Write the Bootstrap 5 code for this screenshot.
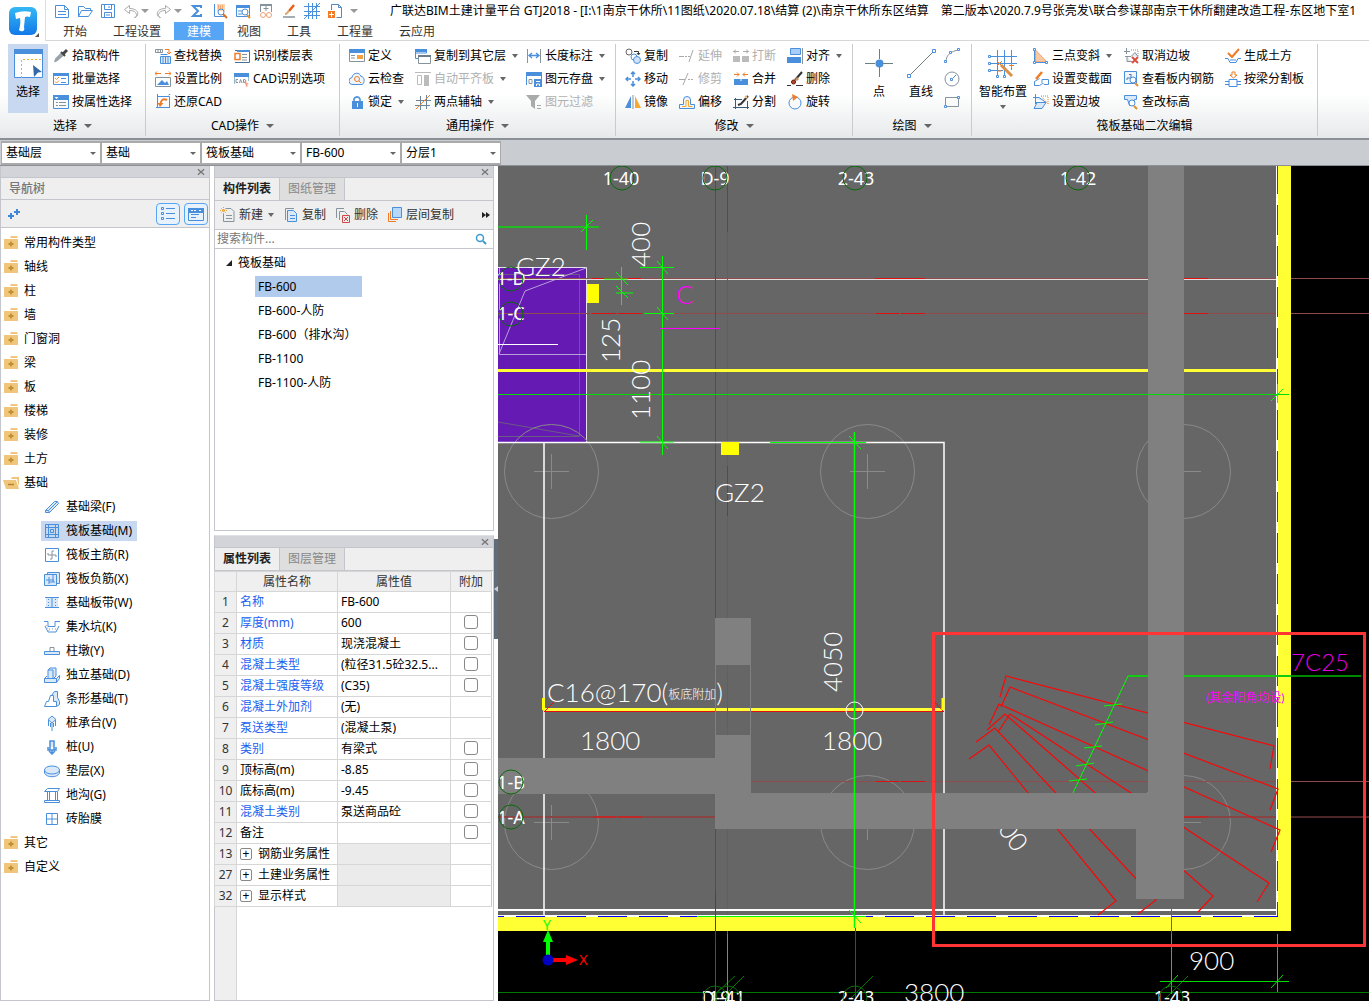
<!DOCTYPE html>
<html lang="zh-CN">
<head>
<meta charset="utf-8">
<meta name="viewport" content="width=device-width, initial-scale=1">
<title>广联达BIM土建计量平台 GTJ2018</title>
<link href="https://cdn.jsdelivr.net/npm/bootstrap@5.3.0/dist/css/bootstrap.min.css" rel="stylesheet">
<script src="https://cdn.jsdelivr.net/npm/bootstrap@5.3.0/dist/js/bootstrap.bundle.min.js"></script>
<style>
:root{--b:#4a8fdc;--line:#c4c6cc}
body{font:12px/16px "Noto Sans","Noto Sans CJK SC",sans-serif;color:#000;background:#fff}
button,input,select{font:inherit;color:inherit}
button{background:none;border:0;padding:0;white-space:nowrap}
svg{display:block;flex:none}
.ic{width:16px;height:16px;fill:none;stroke:var(--b)}
.logo-cell{width:46px;border-right:1px solid #ddd}
.qat{height:22px;gap:7px;padding-left:8px}
.qat .gap-car{display:flex;align-items:center;gap:2px}
.car{width:0;height:0;border:3px solid transparent;border-top:4px solid #666;border-bottom:0;flex:none}
.doc-title{padding-left:25px}
.tabs-row{height:19px;padding-left:4px;border-bottom:1px solid #d4d6d8}
.tabs-row a{padding:0 13px;line-height:19px;color:#333;text-decoration:none}
.tabs-row a.on{background:#57a6f6;color:#fff}
.ribbon{height:99px;background:linear-gradient(#fff 55%,#e6e9eb);border-bottom:2px solid #8b9096;padding-top:3px}
.grp{display:flex;flex-direction:column;height:92px;border-right:1px solid #c9cbcd}
.cap{height:26px;flex:none;display:flex;align-items:center;justify-content:center;gap:7px}
.cap .car,.qat .car{border-width:4px 4px 0}
.qat .car{border-top-color:#999}
.cmds{display:grid;grid-auto-flow:column;grid-template-rows:repeat(3,23px);padding-left:9px;height:69px;flex:none}
.cmds button{display:flex;align-items:center;gap:3px}
.cmds button .car{margin-left:3px}
.off{color:#b0b0b0}.off .ic{stroke:#b0b0b0}
.g1{width:146px}.g1 .cmds{padding-left:8px;grid-template-columns:45px 1fr}
.g2{width:194px}.g2 .cmds{grid-template-columns:79px 1fr}
.g3{width:276px}.g3 .cmds{grid-template-columns:66px 111px 1fr}
.g4{width:237px}.g4 .cmds{grid-template-columns:54px 54px 54px 1fr}
.g5{width:119px}.g5 .cmds{grid-template-columns:42px 43px 1fr;padding-left:6px}
.g6{width:346px}.g6 .cmds{grid-template-columns:54px 90px 102px 1fr;padding-left:7px}
.cmds .big{grid-row:span 3;flex-direction:column;gap:5px;width:40px;padding-top:3px}
.g6 .cmds .big{width:48px}
.big.on{background:#c7d8f0}
.big .ic{width:32px;height:32px}
.combo-row{height:26px;background:#c9ccd1;border-bottom:1px solid #8b9096;padding:1px 0 0 1px}
.combo-row select{width:100px;height:24px;border:2px solid #aaa;border-left-width:1px;border-right-width:1px;border-radius:0;padding:0 4px;appearance:none;background:#fff}
.combo{position:relative}
.combo .car{position:absolute;right:5px;top:11px;pointer-events:none;border-top-width:3px}
.nav-pane{width:210px;border:1px solid var(--line);border-top:0}
.mid-pane{width:280px;margin-left:4px}
.grip{height:12px;background:#d3d4da;border-bottom:1px solid var(--line);display:flex;justify-content:flex-end;align-items:center;padding-right:4px}
.grip svg{width:8px;height:8px;stroke:#777;stroke-width:1.500}
.nav-title{height:22px;background:#efefef;border-bottom:1px solid var(--line);color:#777;font-weight:500;padding-left:8px;line-height:22px}
.nav-tools{height:28px;background:#efefef;border-bottom:1px solid var(--line);padding:0 1px 0 6px;gap:4px}
.nav-tools .tog{width:24px;height:22px;border:1px solid #57a6f6;border-radius:4px;background:#e8f2fd;display:grid;place-items:center}
.tree,.tree ul{list-style:none;margin:0;padding:0}
.tree{padding-top:3px}
.tree .node{display:flex;align-items:center;height:24px;gap:5px;padding-left:2px;width:100%}
.tree ul{padding-left:40px}
.tree ul .node{width:max-content;height:20px;margin:4px 0;gap:6px;padding:0 5px 0 3px}
.tree ul li:first-child .node{margin-top:2px}
.tree ul li:last-child .node{margin-bottom:2px}
.tree .node.on{background:#c7d8f0}
.box{border:1px solid var(--line);border-top:0}
.ptabs{height:23px;background:#efefef;border-bottom:1px solid var(--line)}
.ptabs button{width:65px;border-right:1px solid var(--line);background:#dedede;color:#888}
.ptabs button.on{background:#efefef;color:#222;font-weight:700}
.ptools{height:29px;background:#efefef;border-bottom:1px solid var(--line);padding:0 3px 0 5px;color:#333;gap:9px}
.ptools button{display:flex;align-items:center;gap:3px}
.ptools .car{margin-left:2px}
.find{height:19px;border-bottom:1px solid var(--line);padding-right:5px}
.find input{border:0;outline:0;padding:0 2px;min-width:0;flex:1}
.find input::placeholder{color:#777;opacity:1}
.parts{height:281px;padding-top:3px}
.parts button{display:flex;align-items:center;width:107px;height:21px;margin:3px 0 0 40px;padding-left:3px;color:#000}
.parts button.root{margin:0 0 0 6px;height:21px;gap:5px}
.parts button.on{background:#b1cbec}
.props{width:277px;table-layout:fixed;border-collapse:collapse;margin:0 0 0 -1px}
.props th,.props td{height:21px;padding:0 3px;border:1px solid #d6d6d6;font-weight:400;white-space:nowrap;overflow:hidden;line-height:16px}
.props thead th{background:#efefef;text-align:center;color:#333;height:20px}
.props tbody th{background:#efefef;color:#333;text-align:center;padding:0}
.props td.lk{color:#1a5ff0}
.props td:last-child{text-align:center;border-right-color:var(--line)}
.props input{appearance:none;width:14px;height:14px;border:1px solid #888;border-radius:3px;margin:0;vertical-align:-2px;background:#fff}
.props .na{background:#ebebeb}
.props .exp{width:12px;height:12px;border:1px solid #888;border-radius:2px;line-height:9px;margin:0 6px 0 0;vertical-align:0;background:#fff}
.strip{width:22px;background:#efefef;border-right:1px solid #d6d6d6}
.splitter{width:4px;background:#fff;padding-top:373px}
.splitter button{width:4px;height:100px;background:#5f6b78;color:#fff;display:grid;place-items:center}
.model{min-width:0;background:#000}
.cad{font-family:Lato,"Noto Sans CJK SC",sans-serif;font-weight:300;fill:#fff}
.ax{font:18px "Noto Sans",sans-serif;fill:#fff;text-anchor:middle}
</style>
</head>
<body class="vh-100 overflow-hidden d-flex flex-column">
<svg width="0" height="0" class="position-absolute" aria-hidden="true"><defs>
<symbol id="x" viewBox="0 0 9 9"><path d="M1 1.500L8 7.500M8 1.500L1 7.500"/></symbol>
<symbol id="new" viewBox="0 0 16 16"><path d="M1.500 2.500h9l4 4v8h-13zM10.500 2.500v4h4M4 8.500h8M4 11.500h8"/></symbol>
<symbol id="open" viewBox="0 0 16 16"><path d="M1.500 13.500v-10h5l2 2h5v2M1.500 13.500l3-6h11l-4 6z"/></symbol>
<symbol id="save" viewBox="0 0 16 16"><path d="M1.500 1.500h13v13h-13zM4.500 1.500v5h7v-5M4.500 14.500v-5h7v5M9 3v2M6 12h4"/></symbol>
<symbol id="undo" viewBox="0 0 16 16"><path stroke="#aaa" d="M6.500 2.500l-5 4 5 4v-3c4 0 6 1 7 4 .5 2-1 3-2 3 5-1 5-9-5-9z"/></symbol>
<symbol id="redo" viewBox="0 0 16 16"><path stroke="#aaa" d="M9.500 2.500l5 4-5 4v-3c-4 0-6 1-7 4-.5 2 1 3 2 3-5-1-5-9 5-9z"/></symbol>
<symbol id="sum" viewBox="0 0 16 16"><path stroke-width="2" d="M12 5V3H4l5 5-5 5h8v-2"/></symbol>
<symbol id="q1" viewBox="0 0 16 16"><path d="M2.500 1v12.500H14"/><path fill="#f9d5b8" stroke="none" d="M5 1h8v7H5z"/><path stroke="#f07c28" stroke-dasharray="1 1" d="M6 3h6M6 5h6"/><circle cx="9" cy="9" r="3"/><path stroke="#d87020" stroke-width="2" d="M11 11l4 4"/></symbol>
<symbol id="q2" viewBox="0 0 16 16"><path d="M1.500 2.500h13v11h-13z"/><path fill="#4a8fdc" stroke="none" d="M1 2h14v3H1z"/><path d="M3 8h4M3 11h4"/><circle cx="10" cy="9" r="3" fill="#fff"/><path stroke="#e09030" stroke-width="2" d="M12 12l3 3"/></symbol>
<symbol id="q3" viewBox="0 0 16 16"><path stroke="#87939c" d="M2.500 9V1.500h11V9M8 3v5M5.500 5.500h5"/><path stroke="#87939c" stroke-width="2" d="M2 2h12"/><circle cx="5" cy="12" r="2.500" stroke="#f0a070"/><circle cx="11" cy="12" r="2.500" stroke="#f0a070"/></symbol>
<symbol id="q4" viewBox="0 0 16 16"><path stroke="#87939c" stroke-width="1.500" d="M2 14h12"/><path stroke="#e86018" stroke-width="2.500" d="M13 2l-5 6"/><path stroke="#d8a870" stroke-width="2" d="M8 8c-2 1-1 3-4 3"/></symbol>
<symbol id="q5" viewBox="0 0 16 16"><path d="M4.500 0v16M12.500 0v16M0 3.500h16M0 12.500h16M0 8.500h16M0 16L16 0M8.500 0v16"/></symbol>
<symbol id="q6" viewBox="0 0 16 16"><path d="M4.500 7V1.500h7l3 3v10h-5M11.500 1.500v3h3" stroke="#58b"/><path fill="#f07c28" stroke="none" d="M1 8h7v7H1z"/><path stroke="#fff" d="M4.500 9v5M2 11.500h5"/></symbol>
<symbol id="pick" viewBox="0 0 16 16"><path stroke="#9aa4ad" stroke-width="2" d="M2 14l1-3 6-6M3 13l7-6"/><path stroke="#444" stroke-width="3" d="M10 6l4-4"/><path stroke="#444" stroke-width="2" d="M8 4l4 4"/></symbol>
<symbol id="batch" viewBox="0 0 16 16"><path d="M.5 2.500h15v11H.500z"/><path fill="#4a8fdc" stroke="none" d="M0 2h16v3H0z"/><path stroke="#f0902c" d="M2 7l1.500 1.500L6 6M2 10.500L3.500 12 6 9.500"/><path d="M8 7.500h5M8 11.500h5"/></symbol>
<symbol id="attr" viewBox="0 0 16 16"><path d="M.5 1.500h15v13H.500z"/><path fill="#4a8fdc" stroke="none" d="M0 1h16v5H0z"/><path stroke="#87939c" d="M3 8.500h2M6 8.500h7M3 11.500h2M6 11.500h7"/><path fill="#fff" stroke="none" d="M1.500 3h4l-2 2z"/></symbol>
<symbol id="find" viewBox="0 0 16 16"><path stroke="#87939c" d="M.5 1.500h7v3h-7zM3 2v2M5.500 2v2"/><path stroke="#f07c28" d="M10 1.500h4v4M12 4l2 2 2-2"/><path fill="#dbe8f8" d="M5.500 8.500h10v7h-10zM8 9v6M10.500 9v6M13 9v6M5.500 6.500h7"/></symbol>
<symbol id="ratio" viewBox="0 0 16 16"><path stroke="#f07c28" d="M0 2.500h6M10 2.500h6M2 .5l-2 2 2 2M14 .5l2 2-2 2"/><path d="M.5 6.500h15v9H.500z" stroke="#87939c"/><path fill="#4a8fdc" stroke="none" d="M2 14l5-5 3 3 2-2 2 4z"/></symbol>
<symbol id="restore" viewBox="0 0 16 16"><path d="M2.500 0v14M1 13.500h13.500M2 2.500h12.500V14M13.500 1l2-1"/><path stroke="#f07c28" stroke-width="2" d="M12 6c-4-2-6 0-6.500 4"/><path fill="#f07c28" stroke="none" d="M2.500 9h6L5 13z"/></symbol>
<symbol id="tblr" viewBox="0 0 16 16"><path stroke="#4a6f96" d="M1 2.500h14.500v12H1"/><path stroke="#87939c" d="M8 6.500h5M8 9.500h5M8 12h5"/><path stroke="#4a8fdc" stroke-width="2" d="M3 3h13"/><path stroke="#f07c28" stroke-width="1.500" d="M1 5.500h5v6H1z"/></symbol>
<symbol id="cado" viewBox="0 0 16 16"><path d="M.5 13V2.500h14V10" stroke="#9bc"/><path fill="#4a8fdc" stroke="none" d="M0 2h15v4H0z"/><path stroke="#87939c" d="M4 8.500H2v3h2M5.500 12l1-3.500L8 12M9.500 8.500v3h1.500l1-1.500-1-1.500z"/><path fill="#f0a080" stroke="none" d="M10 10l5 3-2 .5 1 2h-2l-.5-2z"/></symbol>
<symbol id="def" viewBox="0 0 16 16"><path stroke="#87939c" d="M.5 2.500h15v11H.500zM2 7.500h4M2 10h4"/><path fill="#4a8fdc" stroke="none" d="M0 1h16v4H0z"/><path fill="#f5a040" stroke="none" d="M8 7h6v4H8z"/></symbol>
<symbol id="cloud" viewBox="0 0 16 16"><path d="M4 13.500a3.500 3.500 0 0 1-1-7C4 1 11 1 12 5.500c4 0 4 7 1 8z" fill="#eef5fd"/><circle cx="8" cy="8" r="2.500" stroke="#f07c28"/><path stroke="#f07c28" d="M10 10l2 2"/></symbol>
<symbol id="lock" viewBox="0 0 16 16"><path stroke-width="1.600" d="M5 8V5a3.200 3.200 0 0 1 6 0v3"/><path fill="#4a8fdc" stroke="none" d="M3 7h11v8H3z"/><path stroke="#fff" d="M8.500 9v4"/></symbol>
<symbol id="clay" viewBox="0 0 16 16"><path d="M.5 1v9.500H3M.5 5h11V1.500H.500z"/><path fill="#4a8fdc" stroke="none" d="M0 1h12v3H0z"/><path stroke="#87939c" fill="#fff" d="M3.500 7.500h12v8h-12z"/><path stroke="#6d7c88" stroke-width="2" d="M3 8h13"/></symbol>
<symbol id="slab" viewBox="0 0 16 16"><path stroke="#bbb" d="M0 1.500h16M2.500 4.500h4v9h-4z"/><path fill="#bbb" stroke="none" d="M9 4h5v11H9z"/></symbol>
<symbol id="axis" viewBox="0 0 16 16"><path stroke="#6d8296" d="M5.500 2v14M11.500 1v14M1 6.500h15M0 11.500h15"/><path stroke="#f07c28" d="M1 15L15 1"/></symbol>
<symbol id="dim" viewBox="0 0 16 16"><path stroke="#87939c" d="M1.500 1v14M14.500 1v14"/><path d="M3 7.500h10M6 5L3 7.500 6 10M10 5l3 2.500-3 2.500" stroke-width="1.300"/></symbol>
<symbol id="store" viewBox="0 0 16 16"><path d="M.5 14V1.500h15V8"/><path fill="#4a8fdc" stroke="none" d="M0 1h16v4H0zM8 8h8v8H8z"/><path stroke="#87939c" d="M3 8.500h3v4H3z"/><path stroke="#fff" d="M10 10.500h4M10.500 15v-2h3v2"/></symbol>
<symbol id="filt" viewBox="0 0 16 16"><path fill="#aaa" stroke="none" d="M0 1h14L9 7v8l-4-3V7z"/><path stroke="#aaa" d="M11 11.500h4M11 14.500h4"/></symbol>
<symbol id="copy" viewBox="0 0 16 16"><circle cx="4" cy="4" r="3" stroke="#666"/><path stroke="#333" d="M9 3.500h4.500V6M12 5l1.500 2L15 5"/><circle cx="9" cy="9" r="3"/><circle cx="12" cy="12" r="3.500" fill="#cfe2f8"/></symbol>
<symbol id="move" viewBox="0 0 16 16"><path stroke-width="1.500" d="M8 1v5M8 10v5M1 8h5M10 8h5M6 3l2-2 2 2M6 13l2 2 2-2M3 6L1 8l2 2M13 6l2 2-2 2"/></symbol>
<symbol id="mir" viewBox="0 0 16 16"><path stroke="none" fill="#4a8fdc" d="M0 14L6 2v12z"/><path stroke="#87939c" d="M8 1v14"/><path stroke="none" fill="#f6a832" d="M16 14L10 2v12z"/></symbol>
<symbol id="ext" viewBox="0 0 16 16"><path stroke="#aaa" d="M0 8.500h5M6 8.500h2M9 8.500h2M10 14l4-12"/></symbol>
<symbol id="trim" viewBox="0 0 16 16"><path stroke="#aaa" d="M0 8.500h6M9 8.500h2M12 8.500h2M4 14L9 2"/></symbol>
<symbol id="offs" viewBox="0 0 16 16"><path d="M.5 14.500v-4h4V6a3.500 3.500 0 0 1 7 0v4.500h4v4z" fill="#eef5fd"/><path stroke="#f6a832" d="M3 12.500h4V6.500h2.500v6h4"/></symbol>
<symbol id="brk" viewBox="0 0 16 16"><path fill="#bbb" stroke="none" d="M0 8h7v6H0zM9 8h7v6H9z"/><path stroke="#aaa" d="M0 3.500h6M2 1.500v4M10 3.500h6M14 1.500v4"/></symbol>
<symbol id="mrg" viewBox="0 0 16 16"><path fill="#4a8fdc" stroke="none" d="M1 8h14v6H1z"/><path stroke="#f07c28" d="M1 3.500h5M4 1.500l2 2-2 2M10 3.500h5M12 1.500l-2 2 2 2"/><path stroke="#fff" d="M8 8v2"/></symbol>
<symbol id="spl" viewBox="0 0 16 16"><path stroke="#3a5a7a" d="M1 5.500h8M2.500 4v11M14.500 7v8M0 13.500h16"/><path stroke="#333" stroke-width="2" d="M5 11l3-1 7-8"/><path stroke="#f6c080" stroke-width="2" d="M12 2l2 2"/></symbol>
<symbol id="ali" viewBox="0 0 16 16"><path fill="#4a8fdc" stroke="none" d="M0 9h14v6H0z"/><path fill="#a8cdf8" d="M3.500 .5h10v6h-10z"/><path stroke="#87939c" d="M15.500 0v16"/></symbol>
<symbol id="del" viewBox="0 0 16 16"><path stroke="#333" stroke-width="2" d="M15 1L8 9"/><path stroke="#c89060" stroke-width="3" d="M9 7l2 2"/><circle cx="6.500" cy="11" r="2" fill="#c04820" stroke="#601808"/><path stroke="#333" d="M0 14.500h4M9 14.500h7"/></symbol>
<symbol id="rot" viewBox="0 0 16 16"><circle cx="8" cy="9" r="6"/><path fill="#f07c28" stroke="none" d="M5 0l6 3-5 4z"/></symbol>
<symbol id="sel" viewBox="0 0 32 32"><path fill="#fff" d="M2.500 2.500h28v28h-28z"/><path fill="#4a8fdc" stroke="none" d="M2 2h29v5H2z"/><path stroke="#f6a832" stroke-dasharray="2 2" d="M9.500 31V12.500H31"/><path fill="#3468a8" stroke="none" d="M21 18l9 7-4 .5L22 30z"/></symbol>
<symbol id="pt" viewBox="0 0 32 32"><path stroke="#6d8080" d="M2 16.500h10M20 16.500h10M16.500 2v10M16.500 20v10"/><circle cx="16.500" cy="16.500" r="4" fill="#4a8fdc" stroke="none"/></symbol>
<symbol id="ln" viewBox="0 0 32 32"><path stroke="#6d8080" d="M5 28L28 5"/><path fill="#fff" d="M2.500 27.500h3v3h-3zM27.500 2.500h3v3h-3z"/></symbol>
<symbol id="arc" viewBox="0 0 16 16"><path stroke="#87939c" d="M2 14C2 8 5 4 14 2"/><path fill="#fff" d="M.5 12.500h2v2h-2zM5.500 3.500h2v2h-2zM13.500 .5h2v2h-2z"/></symbol>
<symbol id="cir" viewBox="0 0 16 16"><circle cx="8" cy="8" r="7" stroke="#87939c"/><path fill="#fff" d="M6.500 7.500h2v2h-2zM9 7l3-3"/></symbol>
<symbol id="rec" viewBox="0 0 16 16"><path stroke="#87939c" d="M1.500 3.500h13v9h-13z"/><path fill="#fff" d="M.5 11.500h2v2h-2zM13.500 2.500h2v2h-2z"/></symbol>
<symbol id="smart" viewBox="0 0 32 32"><path d="M4 9.500h26M4 16.500h26M4 23.500h12M10.500 3v26M17.500 3v26M24.500 3v20"/><path fill="#fff" d="M1.500 8.500h2v2h-2zM1.500 15.500h2v2h-2zM1.500 22.500h2v2h-2zM9.500 28.500h2v2h-2zM16.500 28.500h2v2h-2z"/><path stroke="#d8904c" stroke-width="3" d="M14 18l11 11"/><path stroke="#f07c28" d="M10 14l5 5M15 14l-5 5M24.500 16v5M22 18.500h5M10 24h4"/></symbol>
<symbol id="tri" viewBox="0 0 16 16"><path fill="#f8c8a0" stroke="#f0a070" d="M2.500 2v12H14z"/><path d="M1.500 2v12.500H13"/><path fill="#fff" d="M.5 .5h2v2h-2zM.5 13.500h2v2h-2zM12.500 13.500h2v2h-2z"/></symbol>
<symbol id="sec" viewBox="0 0 16 16"><path d="M1.500 14.500v-4l5-3M1.500 14.500h5l3-2M9 8.500h6.500v5H11l-2-2z"/><path stroke="#f07c28" stroke-width="2.500" d="M9 1L3 8"/></symbol>
<symbol id="slope" viewBox="0 0 16 16"><path fill="#dbe8f8" d="M3 8.500h10l-4 6H1l3-6M2.500 0v10M0 3.500h6l7 5"/><path stroke="#f07c28" stroke-dasharray="1 1" d="M8 2h7v8z"/></symbol>
<symbol id="noslope" viewBox="0 0 16 16"><path stroke="#87939c" fill="#e4e8ec" d="M2 8.500h6l4-4 3 4M3.500 0v6M1 3.500h6M4 8.500v5h5"/><path stroke="#87939c" stroke-dasharray="1 1" d="M8 2h7v6"/><path stroke="#d85040" stroke-width="2" d="M9 9l6 6M15 9l-6 6"/></symbol>
<symbol id="view" viewBox="0 0 16 16"><path fill="#eef5fd" d="M1.500 .5h12v12h-12z"/><path d="M4 7h7M8 3v8M6 3.500h2M4 9V7" stroke="#55789a"/><circle cx="10" cy="9" r="3" fill="#fff"/><path stroke="#e09030" stroke-width="2" d="M12 12l3 3"/></symbol>
<symbol id="elev" viewBox="0 0 16 16"><path fill="#dbe8f8" d="M1.500 1.500h12v4h-2l-2 6h-3l-2-6h-3z"/><circle cx="9" cy="9" r="3" fill="#fff"/><path stroke="#e09030" stroke-width="2" d="M11 12l3 3"/></symbol>
<symbol id="earth" viewBox="0 0 16 16"><path stroke="#f07c28" stroke-width="2" d="M3 5l4 4 7-8"/><path d="M0 10.500h3l2 4h6l2-4h3M5 12h6"/></symbol>
<symbol id="cut" viewBox="0 0 16 16"><path d="M0 10.500h4v-2h8v2h4M0 13.500h4v2h8v-2h4M4 10v4M12 10v4"/><path stroke="#f07c28" d="M7 1h3v3h2l-3.500 3L5 4h2z"/></symbol>
<symbol id="fold" viewBox="0 0 16 16"><path fill="#f0c67c" stroke="none" d="M1 4h14v10H1zM8 1h6l1 2H7z"/><path stroke="#c09030" stroke-width="1.800" d="M8 6.500v5M5.500 9h5"/></symbol>
<symbol id="foldo" viewBox="0 0 16 16"><path fill="#f0c67c" stroke="none" d="M0 5h13l3 9H3zM9 2h7v10l-2-8H8z"/><path stroke="#b88428" stroke-width="1.500" d="M5 9.500h6"/></symbol>
<symbol id="t1" viewBox="0 0 16 16"><path fill="#dbe8f8" d="M1.500 11.500l9-9h3l1 2-9 9h-4zM1.500 11.500h3l1 2M4.500 11.500l9-9"/></symbol>
<symbol id="t2" viewBox="0 0 16 16"><path d="M1.500 1.500h13v13h-13zM4.500 1.500v13M11.500 1.500v13M1.500 4.500h13M1.500 11.500h13M6.500 6.500h3v3h-3z"/></symbol>
<symbol id="t3" viewBox="0 0 16 16"><path d="M1.500 1.500h13v13h-13z"/><path stroke="#87939c" d="M8 4v8M4 8h8M8 4h2M8 12H6M4 8V6M12 8v2"/></symbol>
<symbol id="t4" viewBox="0 0 16 16"><path fill="#dbe8f8" d="M.5 3.500h12v11H.500zM3.500 3V1.500h12v11H13M5 6v7M9 4v7M2 9h8M5 11h6"/></symbol>
<symbol id="t5" viewBox="0 0 16 16"><path stroke="none" fill="#dbe8f8" d="M2 3h12v10H2z"/><path d="M1 2.500h14M1 12.500h14M8 3v10"/><path stroke-dasharray="1 2" d="M4.500 4v8M11.500 4v8"/></symbol>
<symbol id="t6" viewBox="0 0 16 16"><path d="M0 2.500h4v5h7v-5h5M1 7l3 6h8l3-6"/><path stroke="#87939c" stroke-dasharray="1 2" d="M2 6l3 6M5 10h8"/></symbol>
<symbol id="t7" viewBox="0 0 16 16"><path fill="#dbe8f8" d="M.5 8.500h15v3H.500z"/><path stroke="#87939c" d="M6 8V4.500h4V8"/></symbol>
<symbol id="t8" viewBox="0 0 16 16"><path fill="#dbe8f8" d="M.5 11.500h12v4H.500zM4 11V3l2-2h6v8l-2 2M.5 11.500L3 9M12.500 11.500l3-3v3l-3 4M4 3h5v8"/></symbol>
<symbol id="t9" viewBox="0 0 16 16"><path fill="#dbe8f8" d="M7.500 4.500l3-4h3v6l2 4v3l-3 2"/><path fill="#fff" d="M.5 15.500l2-5h2l2-6h3v6h3v5z"/></symbol>
<symbol id="t10" viewBox="0 0 16 16"><path fill="#dbe8f8" d="M8 1l4 3.500L8 8 4 4.500z"/><path d="M4.500 5v6M11.500 5v6M8 8v8M6.500 8v4M9.500 8v4"/></symbol>
<symbol id="t11" viewBox="0 0 16 16"><path fill="#dbe8f8" stroke-width="1.500" d="M6 2h4v9H6zM8 11v4M4 8v3h8V8M5 12l3 3 3-3"/></symbol>
<symbol id="t12" viewBox="0 0 16 16"><path fill="#dbe8f8" d="M.5 7v3c2 5 13 5 15 0V7"/><ellipse cx="8" cy="7" rx="7.500" ry="4" fill="#dbe8f8"/></symbol>
<symbol id="t13" viewBox="0 0 16 16"><path fill="#fff" d="M3.500 1.500h12l-2 3H.500zM3.500 5v8M5.500 5v8M11.500 5v8M13.500 5v8M.5 13.500h15v2H.500z"/></symbol>
<symbol id="t14" viewBox="0 0 16 16"><path d="M2.500 2.500h11v11h-11zM8 3v10M3 8h10"/></symbol>
<symbol id="m1" viewBox="0 0 16 16"><path stroke="#87939c" d="M6 1.500h5l3 3v10H3.500V7M6 8.500h6M6 11.500h6"/><path stroke="#f0a030" stroke-dasharray="1 1" d="M1 1l5 5M6 1L1 6M0 3.500h7M3.500 0v7"/></symbol>
<symbol id="m2" viewBox="0 0 16 16"><path stroke="#87939c" d="M2.500 13V1.500H11"/><path fill="#dbe8f8" d="M4.500 3.500h6l3 3v8h-9zM7 8.500h5M7 11.500h5"/></symbol>
<symbol id="m3" viewBox="0 0 16 16"><path stroke="#87939c" d="M1.500 11V1.500H9M4.500 13V4.500h5l3 3"/><path stroke="#d04848" d="M7.500 8.500h7v7h-7zM9 10l4 4M13 10l-4 4"/></symbol>
<symbol id="m4" viewBox="0 0 16 16"><path stroke="#f07c28" d="M1.500 6v8.500H9M3.500 4v8.500H11"/><path fill="#b8d8fa" d="M5.500 .5h9v10h-9z"/></symbol>
</defs></svg>

<header class="d-flex">
  <div class="logo-cell d-flex align-items-center ps-2">
    <svg width="32" height="32" viewBox="0 0 32 32" role="img" aria-label="GTJ"><defs><linearGradient id="lg" x2="0" y2="1"><stop stop-color="#35b8f5"/><stop offset="1" stop-color="#127ae8"/></linearGradient></defs><rect x="1" y="2" width="28" height="28" rx="6" fill="url(#lg)"/><path fill="#fff" d="M7 8q8-3 16-1l-1 5q-3-1-5 0l-1 10q1 3-1 4t-4-1q2-7 1-12l-4 1z"/><path fill="#555" d="M31 28v4h-4z"/></svg>
  </div>
  <div class="flex-grow-1 overflow-hidden">
    <div class="qat d-flex align-items-center text-nowrap">
      <button aria-label="新建"><svg class="ic"><use href="#new"/></svg></button>
      <button aria-label="打开"><svg class="ic"><use href="#open"/></svg></button>
      <button aria-label="保存"><svg class="ic"><use href="#save"/></svg></button>
      <button aria-label="撤销" class="gap-car"><svg class="ic"><use href="#undo"/></svg><i class="car"></i></button>
      <button aria-label="恢复" class="gap-car"><svg class="ic"><use href="#redo"/></svg><i class="car"></i></button>
      <button aria-label="汇总"><svg class="ic"><use href="#sum"/></svg></button>
      <button aria-label="查看"><svg class="ic"><use href="#q1"/></svg></button>
      <button aria-label="查找"><svg class="ic"><use href="#q2"/></svg></button>
      <button aria-label="报表"><svg class="ic"><use href="#q3"/></svg></button>
      <button aria-label="格式刷"><svg class="ic"><use href="#q4"/></svg></button>
      <button aria-label="轴网"><svg class="ic"><use href="#q5"/></svg></button>
      <button aria-label="添加"><svg class="ic"><use href="#q6"/></svg></button>
      <button aria-label="更多"><i class="car d-block"></i></button>
      <span class="doc-title">广联达BIM土建计量平台 GTJ2018 - [I:\1南京干休所\11图纸\2020.07.18\结算 (2)\南京干休所东区结算　第二版本\2020.7.9号张亮发\联合参谋部南京干休所翻建改造工程-东区地下室1</span>
    </div>
    <nav class="tabs-row d-flex"><a href="#">开始</a><a href="#">工程设置</a><a href="#" class="on">建模</a><a href="#">视图</a><a href="#">工具</a><a href="#">工程量</a><a href="#">云应用</a></nav>
  </div>
</header>

<section class="ribbon d-flex">
  <div class="grp g1"><div class="cmds">
    <button class="big on"><svg class="ic"><use href="#sel"/></svg>选择</button>
    <button><svg class="ic"><use href="#pick"/></svg>拾取构件</button>
    <button><svg class="ic"><use href="#batch"/></svg>批量选择</button>
    <button><svg class="ic"><use href="#attr"/></svg>按属性选择</button>
  </div><div class="cap">选择<i class="car"></i></div></div>
  <div class="grp g2"><div class="cmds">
    <button><svg class="ic"><use href="#find"/></svg>查找替换</button>
    <button><svg class="ic"><use href="#ratio"/></svg>设置比例</button>
    <button><svg class="ic"><use href="#restore"/></svg>还原CAD</button>
    <button><svg class="ic"><use href="#tblr"/></svg>识别楼层表</button>
    <button><svg class="ic"><use href="#cado"/></svg>CAD识别选项</button>
  </div><div class="cap">CAD操作<i class="car"></i></div></div>
  <div class="grp g3"><div class="cmds">
    <button><svg class="ic"><use href="#def"/></svg>定义</button>
    <button><svg class="ic"><use href="#cloud"/></svg>云检查</button>
    <button><svg class="ic"><use href="#lock"/></svg>锁定<i class="car"></i></button>
    <button><svg class="ic"><use href="#clay"/></svg>复制到其它层<i class="car"></i></button>
    <button class="off"><svg class="ic"><use href="#slab"/></svg>自动平齐板<i class="car"></i></button>
    <button><svg class="ic"><use href="#axis"/></svg>两点辅轴<i class="car"></i></button>
    <button><svg class="ic"><use href="#dim"/></svg>长度标注<i class="car"></i></button>
    <button><svg class="ic"><use href="#store"/></svg>图元存盘<i class="car"></i></button>
    <button class="off"><svg class="ic"><use href="#filt"/></svg>图元过滤</button>
  </div><div class="cap">通用操作<i class="car"></i></div></div>
  <div class="grp g4"><div class="cmds">
    <button><svg class="ic"><use href="#copy"/></svg>复制</button>
    <button><svg class="ic"><use href="#move"/></svg>移动</button>
    <button><svg class="ic"><use href="#mir"/></svg>镜像</button>
    <button class="off"><svg class="ic"><use href="#ext"/></svg>延伸</button>
    <button class="off"><svg class="ic"><use href="#trim"/></svg>修剪</button>
    <button><svg class="ic"><use href="#offs"/></svg>偏移</button>
    <button class="off"><svg class="ic"><use href="#brk"/></svg>打断</button>
    <button><svg class="ic"><use href="#mrg"/></svg>合并</button>
    <button><svg class="ic"><use href="#spl"/></svg>分割</button>
    <button><svg class="ic"><use href="#ali"/></svg>对齐<i class="car"></i></button>
    <button><svg class="ic"><use href="#del"/></svg>删除</button>
    <button><svg class="ic"><use href="#rot"/></svg>旋转</button>
  </div><div class="cap">修改<i class="car"></i></div></div>
  <div class="grp g5"><div class="cmds">
    <button class="big"><svg class="ic"><use href="#pt"/></svg>点</button>
    <button class="big"><svg class="ic"><use href="#ln"/></svg>直线</button>
    <button aria-label="弧线"><svg class="ic"><use href="#arc"/></svg></button>
    <button aria-label="圆"><svg class="ic"><use href="#cir"/></svg></button>
    <button aria-label="矩形"><svg class="ic"><use href="#rec"/></svg></button>
  </div><div class="cap">绘图<i class="car"></i></div></div>
  <div class="grp g6"><div class="cmds">
    <button class="big"><svg class="ic"><use href="#smart"/></svg>智能布置<i class="car m-0"></i></button>
    <button><svg class="ic"><use href="#tri"/></svg>三点变斜<i class="car"></i></button>
    <button><svg class="ic"><use href="#sec"/></svg>设置变截面</button>
    <button><svg class="ic"><use href="#slope"/></svg>设置边坡</button>
    <button><svg class="ic"><use href="#noslope"/></svg>取消边坡</button>
    <button><svg class="ic"><use href="#view"/></svg>查看板内钢筋</button>
    <button><svg class="ic"><use href="#elev"/></svg>查改标高</button>
    <button><svg class="ic"><use href="#earth"/></svg>生成土方</button>
    <button><svg class="ic"><use href="#cut"/></svg>按梁分割板</button>
  </div><div class="cap">筏板基础二次编辑</div></div>
</section>

<div class="combo-row d-flex">
  <div class="combo"><select aria-label="楼层"><option>基础层</option></select><i class="car"></i></div>
  <div class="combo"><select aria-label="构件大类"><option>基础</option></select><i class="car"></i></div>
  <div class="combo"><select aria-label="构件类型"><option>筏板基础</option></select><i class="car"></i></div>
  <div class="combo"><select aria-label="构件"><option>FB-600</option></select><i class="car"></i></div>
  <div class="combo"><select aria-label="分层"><option>分层1</option></select><i class="car"></i></div>
</div>

<main class="d-flex flex-grow-1 overflow-hidden">
  <aside class="nav-pane flex-shrink-0 overflow-hidden">
    <div class="grip"><button aria-label="关闭导航树"><svg><use href="#x"/></svg></button></div>
    <div class="nav-title">导航树</div>
    <div class="nav-tools d-flex align-items-center">
      <button aria-label="展开" class="me-auto"><svg width="14" height="12" viewBox="0 0 14 12" stroke="#3f86d4" stroke-width="2"><path d="M1 8h6M4 5v6M7 4h6M10 1v6"/></svg></button>
      <button class="tog" aria-label="列表"><svg class="ic"><path d="M1.500 1.500h2v2h-2zM1.500 6.500h2v2h-2zM1.500 11.500h2v2h-2zM6 2.500h9M6 7.500h9M6 12.500h9"/></svg></button>
      <button class="tog" aria-label="详情"><svg class="ic"><path d="M.5 2.500h15v12H.500zM3 8.500h8M3 11.500h5"/><path stroke="none" fill="#4a8fdc" d="M0 2h16v5H0z"/><path stroke="#fff" stroke-dasharray="2 1" d="M3 4.500h6M11 4.500h3"/></svg></button>
    </div>
    <ul class="tree">
      <li><button class="node"><svg class="ic"><use href="#fold"/></svg>常用构件类型</button></li>
      <li><button class="node"><svg class="ic"><use href="#fold"/></svg>轴线</button></li>
      <li><button class="node"><svg class="ic"><use href="#fold"/></svg>柱</button></li>
      <li><button class="node"><svg class="ic"><use href="#fold"/></svg>墙</button></li>
      <li><button class="node"><svg class="ic"><use href="#fold"/></svg>门窗洞</button></li>
      <li><button class="node"><svg class="ic"><use href="#fold"/></svg>梁</button></li>
      <li><button class="node"><svg class="ic"><use href="#fold"/></svg>板</button></li>
      <li><button class="node"><svg class="ic"><use href="#fold"/></svg>楼梯</button></li>
      <li><button class="node"><svg class="ic"><use href="#fold"/></svg>装修</button></li>
      <li><button class="node"><svg class="ic"><use href="#fold"/></svg>土方</button></li>
      <li><button class="node"><svg class="ic"><use href="#foldo"/></svg>基础</button>
        <ul>
          <li><button class="node"><svg class="ic"><use href="#t1"/></svg>基础梁(F)</button></li>
          <li><button class="node on"><svg class="ic"><use href="#t2"/></svg>筏板基础(M)</button></li>
          <li><button class="node"><svg class="ic"><use href="#t3"/></svg>筏板主筋(R)</button></li>
          <li><button class="node"><svg class="ic"><use href="#t4"/></svg>筏板负筋(X)</button></li>
          <li><button class="node"><svg class="ic"><use href="#t5"/></svg>基础板带(W)</button></li>
          <li><button class="node"><svg class="ic"><use href="#t6"/></svg>集水坑(K)</button></li>
          <li><button class="node"><svg class="ic"><use href="#t7"/></svg>柱墩(Y)</button></li>
          <li><button class="node"><svg class="ic"><use href="#t8"/></svg>独立基础(D)</button></li>
          <li><button class="node"><svg class="ic"><use href="#t9"/></svg>条形基础(T)</button></li>
          <li><button class="node"><svg class="ic"><use href="#t10"/></svg>桩承台(V)</button></li>
          <li><button class="node"><svg class="ic"><use href="#t11"/></svg>桩(U)</button></li>
          <li><button class="node"><svg class="ic"><use href="#t12"/></svg>垫层(X)</button></li>
          <li><button class="node"><svg class="ic"><use href="#t13"/></svg>地沟(G)</button></li>
          <li><button class="node"><svg class="ic"><use href="#t14"/></svg>砖胎膜</button></li>
        </ul></li>
      <li><button class="node"><svg class="ic"><use href="#fold"/></svg>其它</button></li>
      <li><button class="node"><svg class="ic"><use href="#fold"/></svg>自定义</button></li>
    </ul>
  </aside>

  <section class="mid-pane flex-shrink-0 d-flex flex-column overflow-hidden">
    <div class="box flex-shrink-0">
      <div class="grip"><button aria-label="关闭构件列表"><svg><use href="#x"/></svg></button></div>
      <div class="ptabs d-flex"><button class="on">构件列表</button><button>图纸管理</button></div>
      <div class="ptools d-flex align-items-center">
        <button><svg class="ic"><use href="#m1"/></svg>新建<i class="car"></i></button>
        <button><svg class="ic"><use href="#m2"/></svg>复制</button>
        <button><svg class="ic"><use href="#m3"/></svg>删除</button>
        <button class="me-auto"><svg class="ic"><use href="#m4"/></svg>层间复制</button>
        <button aria-label="更多工具"><svg width="8" height="6" viewBox="0 0 8 6"><path d="M0 0l4 3-4 3zM4 0l4 3-4 3z" fill="#222"/></svg></button>
      </div>
      <div class="find d-flex align-items-center"><input type="text" placeholder="搜索构件..." aria-label="搜索构件"><svg width="14" height="14" viewBox="0 0 14 14" fill="none" stroke="#3c9ad0" stroke-width="1.500"><circle cx="6" cy="6" r="3.500"/><path stroke-width="2" d="M9 9l3 3"/></svg></div>
      <div class="parts">
        <button class="root"><svg width="9" height="8" viewBox="0 0 9 8"><path d="M8 1v6H2z" fill="#222"/></svg>筏板基础</button>
        <button class="on">FB-600</button><button>FB-600-人防</button><button>FB-600（排水沟）</button><button>FB-1100</button><button>FB-1100-人防</button>
      </div>
    </div>
    <div class="box flex-grow-1 d-flex flex-column mt-1 border-top">
      <div class="grip"><button aria-label="关闭属性列表"><svg><use href="#x"/></svg></button></div>
      <div class="ptabs d-flex"><button class="on">属性列表</button><button>图层管理</button></div>
      <table class="props">
        <colgroup><col width="22"><col width="101"><col width="113"><col width="41"></colgroup>
        <thead><tr><th></th><th>属性名称</th><th>属性值</th><th>附加</th></tr></thead>
        <tbody>
        <tr><th>1</th><td class="lk">名称</td><td>FB-600</td><td></td></tr>
        <tr><th>2</th><td class="lk">厚度(mm)</td><td>600</td><td><input type="checkbox" aria-label="附加 厚度"></td></tr>
        <tr><th>3</th><td class="lk">材质</td><td>现浇混凝土</td><td><input type="checkbox" aria-label="附加 材质"></td></tr>
        <tr><th>4</th><td class="lk">混凝土类型</td><td>(粒径31.5砼32.5...</td><td><input type="checkbox" aria-label="附加 混凝土类型"></td></tr>
        <tr><th>5</th><td class="lk">混凝土强度等级</td><td>(C35)</td><td><input type="checkbox" aria-label="附加 混凝土强度等级"></td></tr>
        <tr><th>6</th><td class="lk">混凝土外加剂</td><td>(无)</td><td></td></tr>
        <tr><th>7</th><td class="lk">泵送类型</td><td>(混凝土泵)</td><td></td></tr>
        <tr><th>8</th><td class="lk">类别</td><td>有梁式</td><td><input type="checkbox" aria-label="附加 类别"></td></tr>
        <tr><th>9</th><td>顶标高(m)</td><td>-8.85</td><td><input type="checkbox" aria-label="附加 顶标高"></td></tr>
        <tr><th>10</th><td>底标高(m)</td><td>-9.45</td><td><input type="checkbox" aria-label="附加 底标高"></td></tr>
        <tr><th>11</th><td class="lk">混凝土类别</td><td>泵送商品砼</td><td><input type="checkbox" aria-label="附加 混凝土类别"></td></tr>
        <tr><th>12</th><td>备注</td><td></td><td><input type="checkbox" aria-label="附加 备注"></td></tr>
        <tr><th>13</th><td><button class="exp">+</button>钢筋业务属性</td><td class="na"></td><td></td></tr>
        <tr><th>27</th><td><button class="exp">+</button>土建业务属性</td><td class="na"></td><td></td></tr>
        <tr><th>32</th><td><button class="exp">+</button>显示样式</td><td class="na"></td><td></td></tr>
        </tbody>
      </table>
      <div class="strip flex-grow-1"></div>
    </div>
  </section>
  <div class="splitter flex-shrink-0"><button aria-label="折叠面板"><svg width="4" height="6" viewBox="0 0 4 6"><path d="M4 0v6L0 3z" fill="#ccd"/></svg></button></div>

  <section class="model flex-grow-1">
    <svg class="w-100 h-100" viewBox="498 166 871 835" preserveAspectRatio="xMinYMin slice" fill="none">
      <path fill="#000" d="M498 166h871v835H498z"/>
      <path fill="#666" d="M498 166h780v751H498z"/>
      <!-- purple pit -->
      <path fill="#651ab3" d="M498 267h88v175h-88z"/>
      <path stroke="#e8e0f0" d="M498 267.500h88.500V442"/>
      <path stroke="#6a5c80" d="M498 274.500h81.500v162H498M498 422l81 14"/>
      <path stroke="#b8a0d8" d="M499.500 268v86.500H586M499 354l26-63 61-23"/>
      <path stroke="#fff" d="M498 344.500h60"/>
      <!-- piles -->
      <g stroke="#8a8a8a"><circle cx="551.500" cy="471.500" r="47"/><circle cx="867.500" cy="471.500" r="47"/><circle cx="1183.500" cy="471.500" r="47"/><circle cx="551.500" cy="822.500" r="47"/><circle cx="867.500" cy="822.500" r="47"/><circle cx="1183.500" cy="822.500" r="47"/>
      <path d="M534 471.500h35M551.500 454v35M850 471.500h35M867.500 454v35M1166 471.500h35M534 822.500h35M551.500 805v35M850 822.500h35M867.500 805v35M1166 822.500h35"/></g>
      <!-- axes -->
      <path stroke="#ddd" d="M498 279.500h779"/>
      <path stroke="#904c4c" d="M498 278.500h871M498 313.500h871M751 781.500h618M727.500 166v834"/>
      <path stroke="#8a4444" stroke-width="2" d="M498 817h217M1184 817h94"/><path stroke="#4c2626" stroke-width="2" d="M1291 817h78"/>
      <path stroke="#e01010" d="M592 278.500h49M875 278.500h50M592 313.500h24M618 313.500h24M876 313.500h23M901 313.500h24M1184 278.500h24M1184 313.500h24M876 781.500h23M901 781.500h24M727.500 166v66M727.500 466v50"/>
      <path stroke="#c02828" stroke-width="2" d="M593 817h23M618 817h24M1184 817h24"/>
      <path stroke="#e01010" d="M715.500 166v727M715.500 942v59"/>
      <path stroke="#fff" stroke-width="1.500" d="M498 442.500h446v474M544 442.500v474"/>
      <path stroke="#fff" stroke-width="2" d="M498 910h779"/>
      <path stroke="#ff3" stroke-width="3" d="M498 370.500h780M544 709.500h400"/>
      <path stroke="#e01010" d="M544 711.500h400M545 711l11-11M943 711l-11-12"/>
      <path stroke="#ff0" stroke-width="3" d="M543.500 698v12M943 698v12"/>
      <path fill="#ff0" d="M587 284h12v19h-12zM721 442h18v13h-18z"/>
      <!-- raft edge -->
      <path fill="#ff3" d="M1278 166h13v765H498v-14h780z"/>
      <path stroke="#fff" stroke-width="2" d="M1277 166v751M498 916h780"/>
      <path stroke="#33f" stroke-dasharray="30 11" stroke-dashoffset="2" d="M1277.500 166v751"/>
      <path stroke="#00f" stroke-dasharray="29 12" stroke-dashoffset="23" d="M498 916.500h780"/>
      <!-- radial bars -->
      <path stroke="#f80808" stroke-width="1.200" d="M1000 697l6-21 268 70-4 23M1001 707l9-20 268 102-8 21M989 725l10-21 281 126-9 22M998 732l12-18 259 169-12 19M987 730l18-16 208 182-15 16M976 742l19-14 161 172-18 14M969 759l20-14 127 156-18 14"/>
      <path stroke="#0f0" d="M1073 793l55-117M1104 706l18-2M1095 725l18-3M1084 748l18-2M1076 766l18-3M1069 781l18-2"/>
      <path stroke="#1c1" stroke-width="2" d="M1128 676h163"/><path stroke="#080" stroke-width="2" d="M1291 676h70"/>
      <text class="cad" font-size="26" transform="translate(997 829) rotate(54)">00</text>
      <!-- walls -->
      <path fill="#808080" d="M1148 166h36v733h-48v-70H715v-35H498v-36h217V618h36v175h397z"/>
      <path fill="#666" d="M716 665h34v70h-34z"/>
      <path stroke="#ff3" stroke-width="3" d="M716 709.500h34"/><path stroke="#904c4c" d="M727.500 665v70M716 711.500h34"/>
      <path stroke="#a05038" d="M1171.500 899v35"/>
      <!-- dimensions -->
      <g stroke="#0d0">
        <path stroke-width="2" stroke="#2b2" d="M498 227h101"/><path stroke="#0f0" d="M586.500 215v35M581 232l12-12M604 279h24M621.500 267v38M616 272l12 13M616 293h17M616 286l12 12M640 267.500h34M644 313.500h30M640 442h34M662.500 256v199M657 261l11 13M657 307l11 13M657 436l11 13"/>
        <path d="M498 394.500h791"/><path stroke="#0f0" d="M1277.500 384v19M1271 401l12-12M770 442.500h96M697 916.500h169M849 436l12 13M849 910l12 13"/>
        <path stroke="#0f0" stroke-width="1.500" d="M854.500 432v496"/>
        <path stroke="#070" d="M498 992.500h871M855.500 928v73M715.500 893v49M713 996l22-20M722 998l22-22M851 998l22-22M1166 998l22-22"/>
        <path d="M727.500 934v60M1160 981.500h129M1171.500 934v60M1277.500 934v58M1166 988l12-13M1271 988l12-13"/>
      </g>
      <g class="ax"><text x="621" y="185">1-40</text><text x="715" y="185">D-9</text><text x="856" y="185">2-43</text><text x="1078" y="185">1-42</text><text x="511" y="285">1-D</text><text x="511" y="320">1-C</text><text x="511" y="789">1-B</text><text x="511" y="824">1-A</text><text x="716" y="1004">D-9</text><text x="727" y="1004">1-41</text><text x="856" y="1004">2-43</text><text x="1172" y="1004">1-43</text></g>
      <g stroke="#0a6a0a"><circle cx="622" cy="178" r="12"/><circle cx="715" cy="178" r="12"/><circle cx="855" cy="178" r="12"/><circle cx="1078" cy="178" r="12"/><circle cx="511" cy="279" r="12"/><circle cx="511" cy="314" r="12"/><circle cx="511" cy="782" r="12"/><circle cx="511" cy="817" r="12"/><circle cx="715" cy="998" r="12"/><circle cx="728" cy="998" r="12"/><circle cx="855" cy="998" r="12"/><circle cx="1171" cy="998" r="12"/></g>
      <g class="cad" font-size="26">
        <text x="516" y="276">GZ2</text><text x="715" y="502">GZ2</text>
        <text x="580" y="750">1800</text><text x="822" y="750">1800</text>
        <text x="1189" y="970">900</text><text x="904" y="1002">3800</text>
        <text x="547" y="702">C16@170(<tspan font-size="12" dy="-3">板底附加</tspan><tspan dy="3">)</tspan></text>
        <text transform="translate(650 267) rotate(-90)">400</text>
        <text transform="translate(620 363) rotate(-90)">125</text>
        <text transform="translate(650 420) rotate(-90)">1100</text>
        <text transform="translate(842 692) rotate(-90)">4050</text>
        <text style="fill:#f0f" x="676" y="304">C</text>
      </g>
      <path stroke="#f0f" d="M660 328.500h60"/>
      <g class="cad"><text style="fill:#e000e0" font-size="24" x="1291" y="671">7C25</text><text style="fill:#f0f;font-weight:400" font-size="12" x="1206" y="702">(其余阳角均设)</text></g>
      <circle cx="854.500" cy="710.500" r="8.500" stroke="#fff"/>
      <!-- axis gizmo -->
      <path stroke="#0f0" stroke-width="4" d="M548 957v-18"/><path fill="#0f0" d="M543 942h10l-5-12z"/>
      <path stroke="red" stroke-width="4" d="M551 960h17"/><path fill="red" d="M566 955v10l12-5z"/>
      <circle cx="548" cy="960" r="5.500" fill="#0000c0"/>
      <text x="543" y="930" font-size="14" style="fill:#0f0">Y</text><text x="579" y="965" font-size="15" style="fill:red">X</text>
      <path stroke="#ff3535" stroke-width="3" d="M933.500 633.500h431v312h-431z"/>
    </svg>
  </section>
</main>
</body>
</html>
